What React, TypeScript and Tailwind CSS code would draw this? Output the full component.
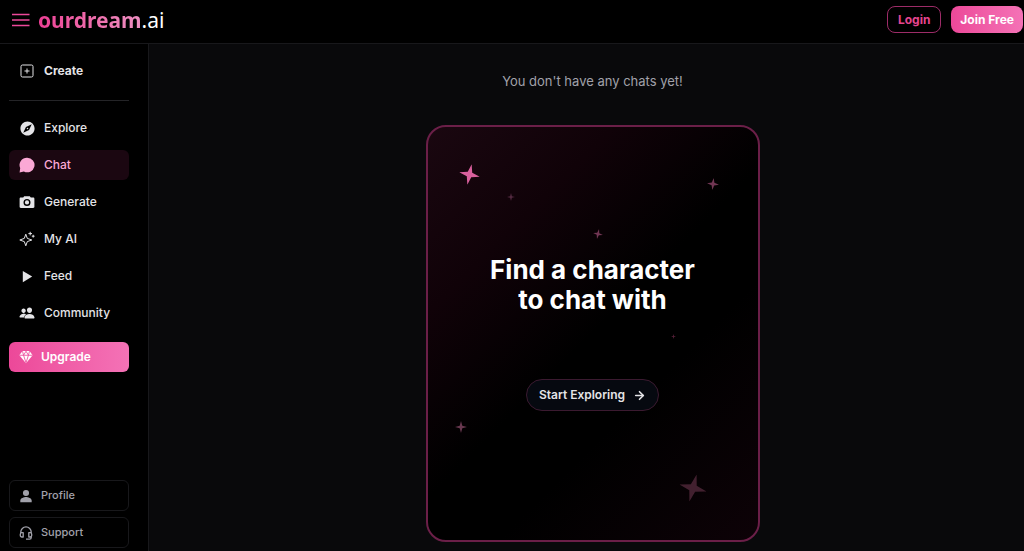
import type { ReactNode } from "react";
import { ArrowRight } from "lucide-react";
import { IoPeople, IoPersonSharp, IoPlaySharp } from "react-icons/io5";
import { MdExplore } from "react-icons/md";

function CreateIcon() {
  return (
    <svg viewBox="0 0 16 16" className="size-4" fill="none" stroke="currentColor" aria-hidden="true">
      <rect x="2" y="2" width="12" height="12" rx="1.5" />
      <path d="M8 5.5v5M5.5 8h5" />
    </svg>
  );
}

function ChatIcon() {
  return (
    <svg viewBox="0 0 16 16" className="size-4" fill="currentColor" aria-hidden="true">
      <path d="M8.2 .7a7.3 7.3 0 1 1-3.3 13.8L.6 15.6l.6-4.5A7.3 7.3 0 0 1 8.2.7Z" />
    </svg>
  );
}

function CameraIcon() {
  return (
    <svg viewBox="0 0 16 16" className="size-4" aria-hidden="true">
      <path
        fill="currentColor"
        fillRule="evenodd"
        d="M5.2 2.2h5.6l1 1.3h2.4c.7 0 1.2.5 1.2 1.2v8c0 .7-.5 1.2-1.2 1.2H1.8c-.7 0-1.2-.5-1.2-1.2v-8c0-.7.5-1.2 1.2-1.2h2.4l1-1.3ZM8 4.9a3.5 3.5 0 1 0 0 7 3.5 3.5 0 0 0 0-7Zm0 1.4a2.1 2.1 0 1 1 0 4.2 2.1 2.1 0 0 1 0-4.2Z"
      />
    </svg>
  );
}

function SparkleIcon() {
  return (
    <svg viewBox="0 0 16 16" className="size-4" fill="none" stroke="currentColor" strokeLinejoin="round" aria-hidden="true">
      <path d="M6.8 3.2 8.3 7.4 12.8 9 8.3 10.6 6.8 14.8 5.3 10.6.8 9 5.3 7.4Z" />
      <path d="M11.2.8v3.6M9.4 2.6H13M14.2 3.8v2.8M12.8 5.2h2.8" />
    </svg>
  );
}

function DiamondIcon() {
  return (
    <svg viewBox="0 0 16 16" className="size-3.5" aria-hidden="true">
      <path fill="currentColor" d="M4 1.2h8L15.6 6 8 15.2.4 6Z" />
      <path
        fill="none"
        stroke="#ee4f9f"
        strokeWidth="1"
        d="M.5 6h15M4 1.4 5.2 6 8 1.4 10.8 6 12 1.4M5.2 6 8 14.5 10.8 6"
      />
    </svg>
  );
}

function HeadsetIcon() {
  return (
    <svg viewBox="0 0 16 16" className="size-3.5" fill="none" stroke="currentColor" strokeWidth="1.5" strokeLinejoin="round" aria-hidden="true">
      <path d="M2 8.5V7a6 6 0 0 1 12 0v1.5M4.8 7.6v5H3.2a1.7 1.7 0 0 1-1.7-1.7V9.3c0-1 .7-1.7 1.7-1.7ZM11.2 7.6v5h1.6c1 0 1.7-.7 1.7-1.7V9.3c0-1-.7-1.7-1.7-1.7ZM14 12v1.2c0 1-.7 1.8-1.8 1.8H8" />
    </svg>
  );
}

function NavItem({ icon, label, active = false }: { icon: ReactNode; label: string; active?: boolean }) {
  return (
    <a
      href="#"
      aria-current={active ? "page" : undefined}
      className={
        active
          ? "flex h-[30px] items-center gap-[9px] rounded-md bg-[#1b0711] pl-2.5 text-[#fba8d5]"
          : "flex h-[30px] items-center gap-[9px] rounded-md pl-2.5 text-[#e4e4e7]"
      }
    >
      <span className="flex size-4 items-center justify-center">{icon}</span>
      {label}
    </a>
  );
}

function Star({ className }: { className: string }) {
  return (
    <svg viewBox="0 0 24 24" className={"absolute " + className} fill="currentColor" aria-hidden="true">
      <path d="M12 0 14.6 9.4 24 12 14.6 14.6 12 24 9.4 14.6 0 12 9.4 9.4Z" />
    </svg>
  );
}

export default function App() {
  return (
    <div className="flex min-h-screen flex-col bg-[#09090b] font-['Inter','Liberation_Sans',sans-serif] text-white">
      <header className="flex h-11 items-center justify-between border-b border-[#18181b] bg-black pb-1 pl-3 pr-px">
        <div className="flex items-center gap-2">
          <button type="button" aria-label="Toggle menu" className="text-[#ec4899]">
            <svg viewBox="0 0 18 14" className="h-3.5 w-[18px]" stroke="currentColor" strokeWidth="1.5" aria-hidden="true">
              <path d="M0 1.5h17.5M0 7h17.5M0 12.5h17.5" />
            </svg>
          </button>
          <a href="#" className="font-['Noto_Sans',sans-serif] text-[21px] leading-7">
            <span className="bg-linear-to-r from-[#ec3d94] to-[#ed8fc2] bg-clip-text font-bold text-transparent">ourdream</span>
            .ai
          </a>
        </div>
        <div className="flex gap-2.5 text-xs font-bold">
          <button type="button" className="h-[27px] rounded-lg border border-[#9d2c68] px-2.5 text-[#e5458f]">
            Login
          </button>
          <button type="button" className="h-[27px] rounded-lg bg-linear-to-r from-[#ec4899] to-[#f472b6] px-[9px]">
            Join Free
          </button>
        </div>
      </header>

      <div className="flex flex-1">
        <aside className="flex w-[149px] shrink-0 flex-col border-r border-[#18181b] bg-black pb-[3px] pl-[9px] pr-[19px] pt-3">
          <nav className="flex flex-col text-xs font-medium">
            <div className="border-b border-[#242427] pb-3.5 font-bold">
              <NavItem icon={<CreateIcon />} label="Create" />
            </div>
            <div className="flex flex-col gap-[7px] pt-3">
              <NavItem icon={<MdExplore size={17} className="shrink-0" />} label="Explore" />
              <NavItem icon={<ChatIcon />} label="Chat" active />
              <NavItem icon={<CameraIcon />} label="Generate" />
              <NavItem icon={<SparkleIcon />} label="My AI" />
              <NavItem icon={<IoPlaySharp size={15} />} label="Feed" />
              <NavItem icon={<IoPeople size={16} />} label="Community" />
            </div>
          </nav>
          <button
            type="button"
            className="mt-3.5 flex h-[30px] items-center gap-2 rounded-md bg-linear-to-r from-[#ec4899] to-[#f472b6] pl-2.5 text-xs font-semibold"
          >
            <DiamondIcon />
            Upgrade
          </button>
          <div className="mt-auto flex flex-col gap-1.5 text-[11px] font-medium text-[#a1a1aa]">
            <a href="#" className="flex h-[31px] items-center gap-2 rounded-md border border-[#18181b] pl-[9px]">
              <IoPersonSharp size={14} />
              Profile
            </a>
            <a href="#" className="flex h-[31px] items-center gap-2 rounded-md border border-[#18181b] pl-[9px]">
              <HeadsetIcon />
              Support
            </a>
          </div>
        </aside>

        <main className="flex flex-1 flex-col items-center pb-[9px] pl-3 pt-[27px]">
          <p className="text-[13px] leading-5 text-[#a1a1aa]">You don't have any chats yet!</p>
          <section className="relative mt-[34px] flex w-full max-w-[334px] flex-1 flex-col items-center rounded-[20px] border-2 border-[#6b1f48] bg-[linear-gradient(135deg,#1a0710_0%,#100208_25%,#000_50%,#000_65%,#0d0207_100%)] pt-32">
            <Star className="left-[31px] top-[37px] size-[21px] rotate-12 text-[#d9609d]" />
            <Star className="left-[79px] top-[66px] size-2 text-[#552b42]" />
            <Star className="right-[39px] top-[51px] size-3 rotate-6 text-[#713653]" />
            <Star className="left-[165px] top-[102px] size-2.5 rotate-12 text-[#713653]" />
            <Star className="right-[82px] top-[207px] size-[5px] text-[#552038]" />
            <Star className="left-[27px] top-[294px] size-3 text-[#68384f]" />
            <Star className="bottom-[38px] right-[51px] size-7 rotate-[15deg] text-[#42202f]" />
            <h1 className="text-center text-[26px] font-bold leading-[30px]">
              Find a character
              <br />
              to chat with
            </h1>
            <button
              type="button"
              className="mt-16 flex h-8 items-center gap-2 rounded-full border border-[#3b1a30] bg-[#060910] px-3 text-xs font-semibold text-[#e4e4e7]"
            >
              Start Exploring
              <ArrowRight size={13} strokeWidth={3} aria-hidden="true" />
            </button>
          </section>
        </main>
      </div>
    </div>
  );
}
